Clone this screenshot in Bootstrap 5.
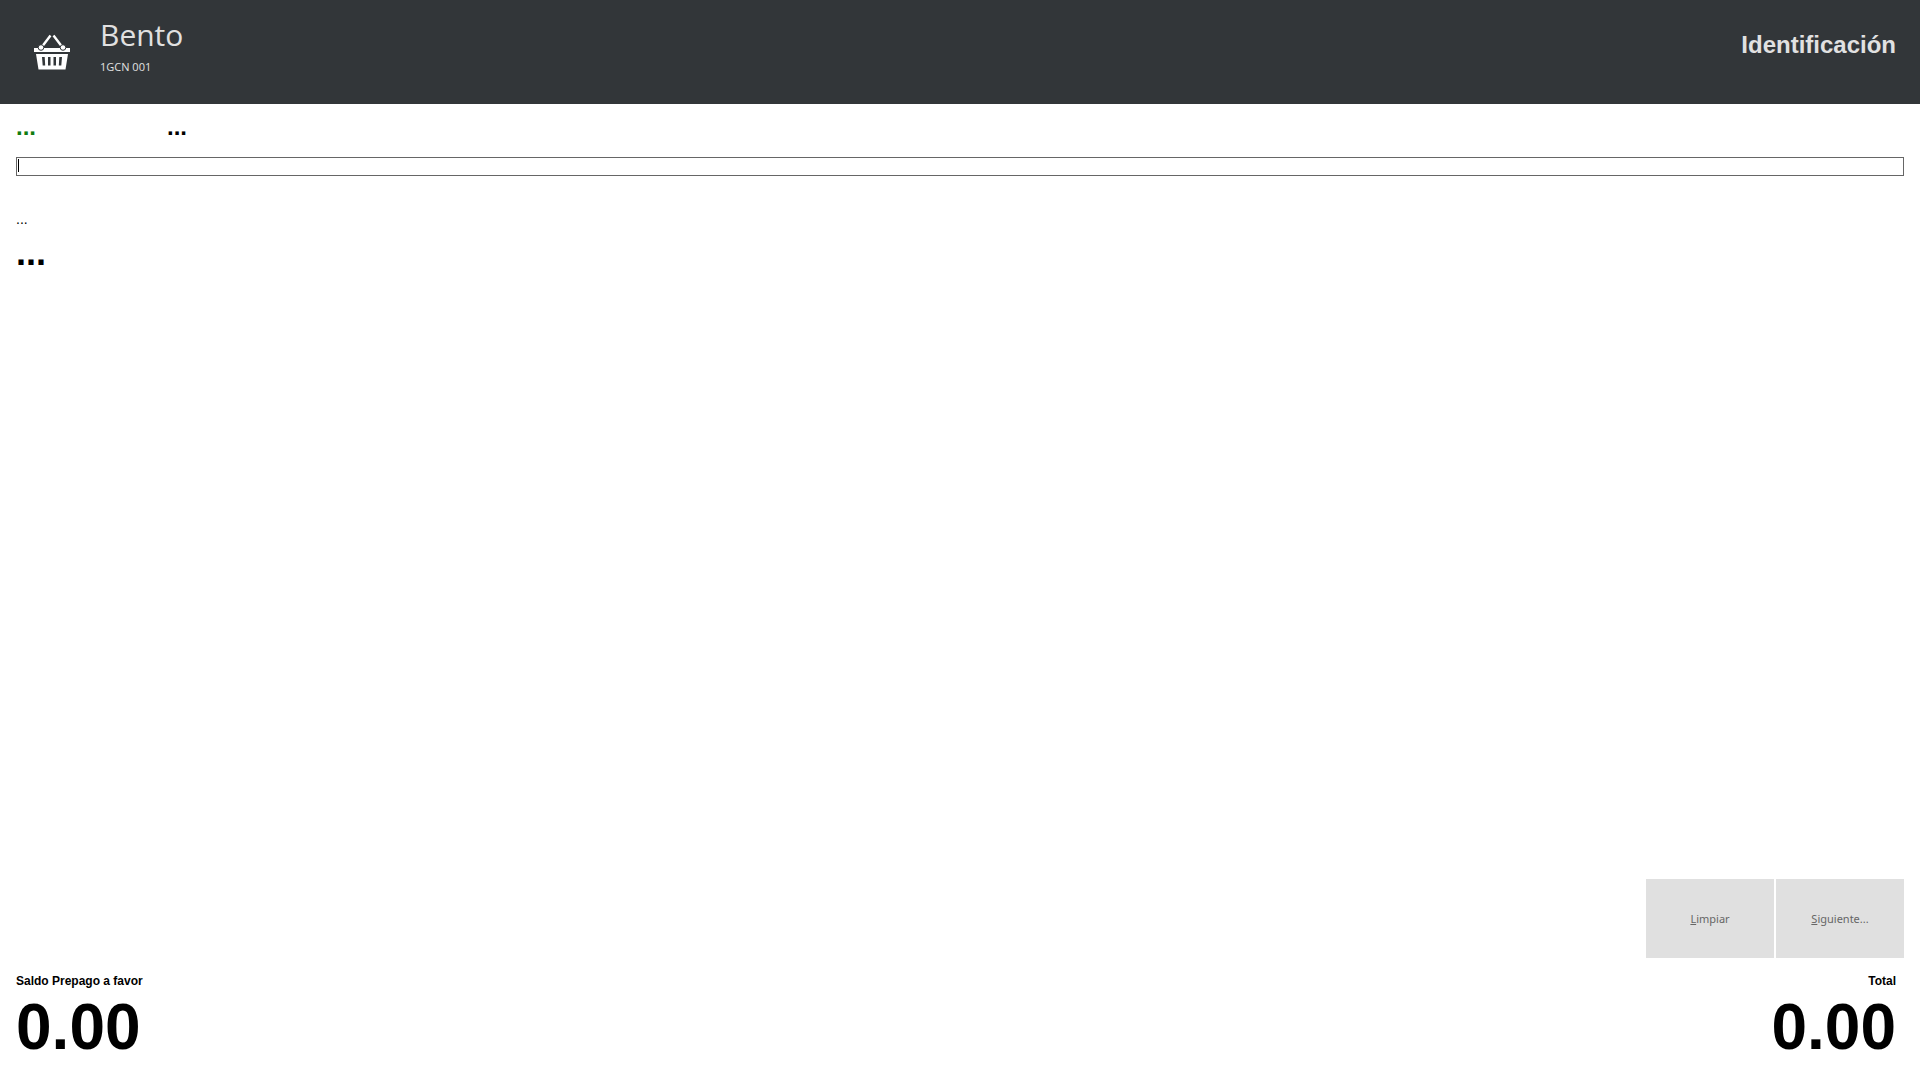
<!DOCTYPE html>
<html lang="es">
<head>
<meta charset="utf-8">
<meta name="viewport" content="width=device-width, initial-scale=1">
<title>Bento - Identificación</title>
<link href="https://cdn.jsdelivr.net/npm/bootstrap@5.3.0/dist/css/bootstrap.min.css" rel="stylesheet">
<style>
  body { font-family: "Liberation Sans", Arial, sans-serif; color: #000; background: #fff; }
  .top-bar { background: #323639; color: #e1e1e1; padding: 16px 24px 0 32px; height: 104px; }
  .basket { width: 40px; height: 40px; margin-top: 16px; }
  .brand-text { font-family: "Open Sans", "Noto Sans", sans-serif; margin-left: 28px; }
  .brand-name { font-size: 30px; font-weight: 400; line-height: 38px; }
  .brand-code { font-size: 11px; line-height: 26px; }
  .heading-md { font-size: 24px; line-height: 28px; font-weight: 700; }
  .heading-lg { font-size: 36px; line-height: 40px; font-weight: 700; }
  .page-title { margin-top: 15px; }
  .status-row { padding-top: 9px; }
  .status-cell { width: 151px; color: #107c10; }
  .scan-input { height: 19px; font-size: 12px; line-height: 16px; padding: 0 4px; border: 1px solid #666; border-radius: 0; background: #fff; }
  .scan-input:focus { outline: 0; box-shadow: none; border-color: #666; }
  .caret-bar { position: absolute; left: 2px; top: 2px; width: 1px; height: 13px; background: #000; pointer-events: none; }
  .details { padding-top: 35px; }
  .detail-text { font-size: 14px; line-height: 16px; margin-bottom: 6px; }
  .actions { gap: 2px; }
  .action-btn { width: 128px; height: 79px; border: 0; border-radius: 0; background: #e0e0e0; color: #666; font-family: "Noto Sans", "Open Sans", sans-serif; font-size: 11px; line-height: 16px; }
  .totals { padding: 15px 16px 17px; }
  .total-label { font-size: 12px; line-height: 16px; font-weight: 700; margin-bottom: 2px; }
  .total-value { font-size: 64px; line-height: 72px; font-weight: 700; }
</style>
</head>
<body>
<div class="d-flex flex-column min-vh-100">
  <header class="top-bar d-flex align-items-start">
    <svg class="basket" viewBox="0 0 40 40" aria-hidden="true">
      <g stroke="#fff" stroke-width="2.4" fill="none">
        <path d="M9 16 18.500 3.500M31 16 21.500 3.500"/>
      </g>
      <path fill="#fff" d="M2 16h36v4H2zM4 22h32l-2.500 15.500h-27z"/>
      <path fill="#323639" d="M10 25h2.700l.5 8.500h-2.500zM16 25h2.500v8.500H16zM21.500 25H24v8.500h-2.500zM27.300 25H30l-.7 8.500h-2.500z"/>
      <circle cx="9" cy="15.500" r="2.800" fill="#fff" stroke="#323639"/>
      <circle cx="31" cy="15.500" r="2.800" fill="#fff" stroke="#323639"/>
    </svg>
    <div class="brand-text">
      <div class="brand-name">Bento</div>
      <div class="brand-code">1GCN 001</div>
    </div>
    <h1 class="page-title heading-md ms-auto mb-0">Identificación</h1>
  </header>

  <main class="d-flex flex-column flex-grow-1 px-3">
    <div class="status-row heading-md d-flex mb-3">
      <div class="status-cell">...</div>
      <div>...</div>
    </div>
    <div class="position-relative d-flex">
      <input type="text" class="scan-input w-100" aria-label="Identificación">
      <span class="caret-bar"></span>
    </div>
    <div class="details">
      <div class="detail-text">...</div>
      <div class="heading-lg">...</div>
    </div>
    <div class="actions d-flex justify-content-end mt-auto">
      <button type="button" class="btn action-btn p-0"><u>L</u>impiar</button>
      <button type="button" class="btn action-btn p-0"><u>S</u>iguiente...</button>
    </div>
  </main>

  <footer class="totals d-flex justify-content-between">
    <div>
      <div class="total-label">Saldo Prepago a favor</div>
      <div class="total-value">0.00</div>
    </div>
    <div class="text-end pe-2">
      <div class="total-label">Total</div>
      <div class="total-value">0.00</div>
    </div>
  </footer>
</div>
<script src="https://cdn.jsdelivr.net/npm/bootstrap@5.3.0/dist/js/bootstrap.bundle.min.js"></script>
</body>
</html>
